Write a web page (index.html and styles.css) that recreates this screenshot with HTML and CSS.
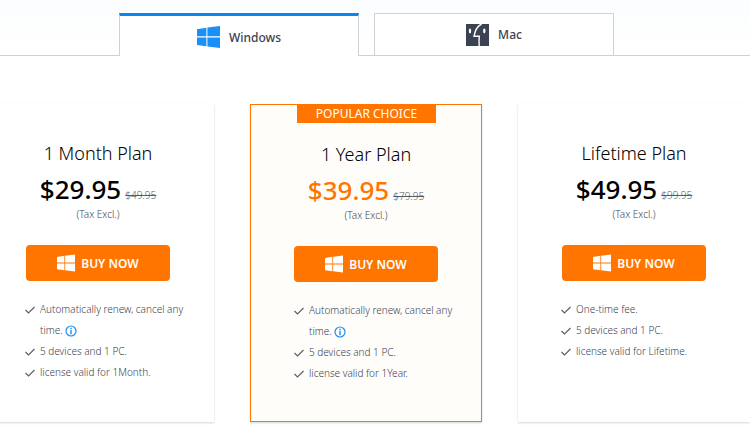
FILE: index.html
```
<!DOCTYPE html>
<html lang="en">
<head>
    <meta charset="UTF-8">
    <meta name="viewport" content="width=device-width, initial-scale=1.0">
    <title>Pricing</title>
    <link rel="stylesheet" href="styles.css">
</head>
<body>
<!-- shared icons -->
<svg class="sprite" aria-hidden="true">
    <symbol id="icon-windows" viewBox="0 0 23 22">
        <path d="M0 3.2 9.4 1.8V10.3H0zM10.4 1.6 23 0V10.3H10.4zM0 11.6H9.4V20.2L0 18.9zM10.4 11.6H23V22L10.4 20.4z"/>
    </symbol>
    <symbol id="icon-mac" viewBox="0 0 23 22">
        <path fill="#3b4252" d="M0 0H23V22H0z"/>
        <path fill="none" stroke="#fff" stroke-width="1.4" d="M15.6 0C11.2 2 9 6.500 8 12.300H13.300Q12.900 17 13.200 22"/>
        <ellipse cx="4" cy="7" rx="1.200" ry="2.400" fill="#fff"/>
        <ellipse cx="18.300" cy="7" rx="1.200" ry="2.400" fill="#fff"/>
    </symbol>
    <symbol id="icon-check" viewBox="0 0 10 8">
        <path fill="none" stroke="#5b6068" stroke-width="1.200" d="M.5 4 3.500 7 9.500 1"/>
    </symbol>
    <symbol id="icon-info" viewBox="0 0 12 12">
        <circle cx="6" cy="6" r="5" fill="none" stroke="#1a90f0" stroke-width="1.200"/>
        <path fill="#1a90f0" d="M5.300 2.800h1.400v1.400H5.300zM5.300 5h1.400v4.200H5.300z"/>
    </symbol>
</svg>

<nav class="tabs">
    <button type="button" class="tab active">
        <svg class="tab-icon"><use href="#icon-windows"/></svg>
        <span>Windows</span>
    </button>
    <button type="button" class="tab">
        <svg class="tab-icon"><use href="#icon-mac"/></svg>
        <span>Mac</span>
    </button>
</nav>

<main class="plans">
    <section class="plan">
        <h2>1 Month Plan</h2>
        <p class="price"><strong>$29.95</strong><del>$49.95</del></p>
        <p class="tax">(Tax Excl.)</p>
        <a href="#" class="buy"><svg><use href="#icon-windows"/></svg>BUY NOW</a>
        <ul class="features">
            <li><svg class="check"><use href="#icon-check"/></svg><span>Automatically renew, cancel any time. <svg class="info"><use href="#icon-info"/></svg></span></li>
            <li><svg class="check"><use href="#icon-check"/></svg><span>5 devices and 1 PC.</span></li>
            <li><svg class="check"><use href="#icon-check"/></svg><span>license valid for 1Month.</span></li>
        </ul>
    </section>

    <section class="plan popular">
        <span class="badge">POPULAR CHOICE</span>
        <h2>1 Year Plan</h2>
        <p class="price"><strong>$39.95</strong><del>$79.95</del></p>
        <p class="tax">(Tax Excl.)</p>
        <a href="#" class="buy"><svg><use href="#icon-windows"/></svg>BUY NOW</a>
        <ul class="features">
            <li><svg class="check"><use href="#icon-check"/></svg><span>Automatically renew, cancel any time. <svg class="info"><use href="#icon-info"/></svg></span></li>
            <li><svg class="check"><use href="#icon-check"/></svg><span>5 devices and 1 PC.</span></li>
            <li><svg class="check"><use href="#icon-check"/></svg><span>license valid for 1Year.</span></li>
        </ul>
    </section>

    <section class="plan">
        <h2>Lifetime Plan</h2>
        <p class="price"><strong>$49.95</strong><del>$99.95</del></p>
        <p class="tax">(Tax Excl.)</p>
        <a href="#" class="buy"><svg><use href="#icon-windows"/></svg>BUY NOW</a>
        <ul class="features">
            <li><svg class="check"><use href="#icon-check"/></svg><span>One-time fee.</span></li>
            <li><svg class="check"><use href="#icon-check"/></svg><span>5 devices and 1 PC.</span></li>
            <li><svg class="check"><use href="#icon-check"/></svg><span>license valid for Lifetime.</span></li>
        </ul>
    </section>
</main>
</body>
</html>
```
FILE: styles.css
```
:root {
    --orange: #ff7500;
    --blue: #0a84ee;
    --line: #cfd1d6;
    --text: #3b4252;
}

* {
    margin: 0;
    padding: 0;
    box-sizing: border-box;
}

body {
    font-family: "Noto Sans", "Open Sans", sans-serif;
    color: var(--text);
    background: #fff;
    overflow-x: hidden;
}

.sprite {
    position: absolute;
    width: 0;
    height: 0;
}

/* platform tabs */
.tabs {
    display: flex;
    justify-content: center;
    gap: 15px;
    padding: 13px 17px 0 0;
    border-bottom: 1px solid var(--line);
    background: linear-gradient(#fbfdfe, #fff);
}

.tab {
    display: flex;
    align-items: center;
    justify-content: center;
    gap: 9px;
    width: 240px;
    height: 43px;
    margin-bottom: -1px;
    border: 1px solid var(--line);
    background: #fff;
    color: var(--text);
    font-family: inherit;
    font-size: 12px;
    font-weight: 500;
    cursor: pointer;
}

/* covers the line below it */
.tab.active {
    border-top: 3px solid var(--blue);
    border-bottom: none;
    padding-top: 2px;
}

.tab-icon {
    width: 23px;
    height: 22px;
    fill: #1890f8;
}

/* plan cards */
.plans {
    display: flex;
    justify-content: center;
    gap: 36px;
    padding: 48px 18px 24px 0;
}

.plan {
    position: relative;
    flex: 0 0 232px;
    padding: 34px 0 37px;
    text-align: center;
    box-shadow: 0 1px 2px rgba(0, 0, 0, 0.16);
}

.plan.popular {
    border: 1px solid var(--orange);
    background: #fffdfa;
}

.badge {
    position: absolute;
    top: 0;
    left: 46px;
    right: 45px;
    background: var(--orange);
    color: #fff;
    font-size: 12px;
    line-height: 18px;
}

h2 {
    color: #000;
    font-size: 18px;
    font-weight: 300;
    line-height: 30px;
}

.price {
    display: flex;
    align-items: baseline;
    justify-content: center;
    gap: 4px;
    height: 36px;
    margin-top: 3px;
    color: #000;
}

.price strong {
    font-size: 26px;
    font-weight: 500;
    line-height: 36px;
}

.popular .price {
    color: var(--orange);
}

.price del {
    color: #555b66;
    font-size: 10px;
    font-weight: 300;
}

.tax {
    font-size: 10px;
    font-weight: 300;
    line-height: 14px;
}

.buy {
    display: flex;
    align-items: center;
    justify-content: center;
    gap: 6px;
    width: 144px;
    height: 36px;
    margin: 24px auto 18px;
    border-radius: 4px;
    background: var(--orange);
    color: #fff;
    font-size: 12px;
    font-weight: 600;
    text-decoration: none;
}

.buy svg {
    width: 18px;
    height: 18px;
    fill: #fff;
}

.features {
    padding: 0 24px 0 43px;
    list-style: none;
    font-size: 10px;
    font-weight: 300;
    line-height: 21px;
    text-align: left;
}

.features li {
    display: flex;
    gap: 5px;
}

.check {
    flex: none;
    width: 10px;
    height: 8px;
    margin-top: 7px;
}

.info {
    width: 12px;
    height: 12px;
    vertical-align: -3px;
}
```
